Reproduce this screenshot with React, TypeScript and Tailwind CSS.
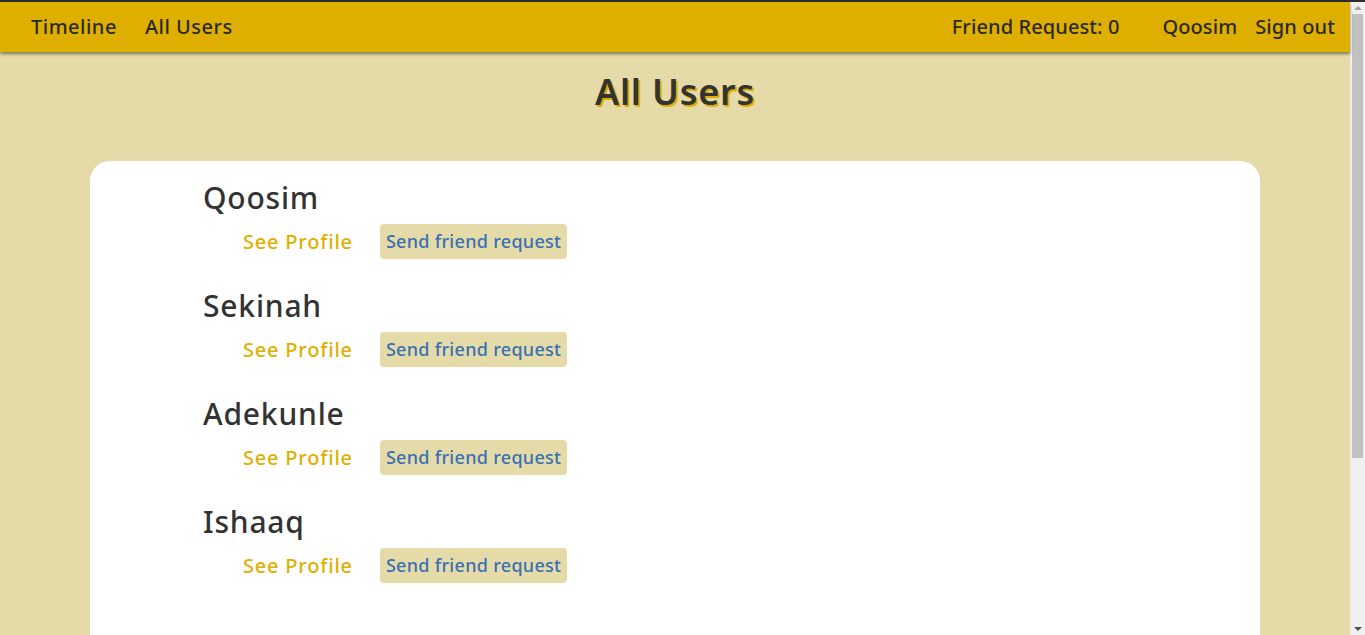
import React from 'react';

const users = ['Qoosim', 'Sekinah', 'Adekunle', 'Ishaaq'];

const font = { fontFamily: '"Noto Sans", "Open Sans", sans-serif' };

const Navbar = () => (
  <nav className="relative z-10 h-[50px] bg-[#dfaf00] shadow-[0_2px_3px_rgba(0,0,0,0.45)] flex items-center justify-between pl-[31px] pr-[15px] text-[20px] font-medium text-[#2a2a2a]">
    <div className="flex items-center gap-[28px] tracking-[0.5px]">
      <a href="#">Timeline</a>
      <a href="#">All Users</a>
    </div>
    <div className="flex items-center tracking-[0.1px]">
      <span className="mr-[43px]">Friend Request: 0</span>
      <a href="#" className="mr-[18px]">Qoosim</a>
      <a href="#">Sign out</a>
    </div>
  </nav>
);

// drawn like the classic browser scrollbar in the screenshot
const Scrollbar = () => (
  <div className="w-[15px] h-[633px] shrink-0 bg-[#f0f0f0] flex flex-col items-center">
    <div className="h-[12px] flex items-center justify-center">
      <div className="w-0 h-0 border-l-[4px] border-r-[4px] border-b-[4px] border-l-transparent border-r-transparent border-b-[#a3a3a3]" />
    </div>
    <div className="w-[11px] h-[444px] bg-[#c1c1c1]" />
    <div className="flex-1" />
    <div className="h-[12px] flex items-center justify-center">
      <div className="w-0 h-0 border-l-[4px] border-r-[4px] border-t-[4px] border-l-transparent border-r-transparent border-t-[#505050]" />
    </div>
  </div>
);

const AllUsers = () => {
  return (
    <div className="h-screen overflow-hidden border-t-2 border-[#2b2b2b] flex bg-[#e4dba8]" style={font}>
      <div className="flex-1 min-w-0">
        <Navbar />

        <h1 className="mt-[16px] text-center text-[36px] leading-[48px] font-semibold text-[#333] [text-shadow:2px_2px_0_#dfaf00] tracking-[0.8px]">
          All Users
        </h1>

        <div className="mx-auto mt-[45px] w-[1170px] min-h-[700px] bg-white rounded-[20px] pt-[19px] pl-[113px]">
          {users.map(name => (
            <div key={name} className="mb-[29px]">
              <h2 className="text-[30px] leading-[36px] font-medium text-[#333] tracking-[0.8px]">{name}</h2>
              <div className="mt-2 flex items-center pl-[40px]">
                <a href="#" className="text-[20px] font-medium text-[#dfaf00] tracking-[0.8px]">See Profile</a>
                <button className="ml-[27px] h-[35px] px-[6px] rounded-[4px] bg-[#e4dba8] text-[18px] font-medium text-[#3a6fb5] tracking-[0.3px]">
                  Send friend request
                </button>
              </div>
            </div>
          ))}
        </div>
      </div>
      <Scrollbar />
    </div>
  );
};

export default AllUsers;
